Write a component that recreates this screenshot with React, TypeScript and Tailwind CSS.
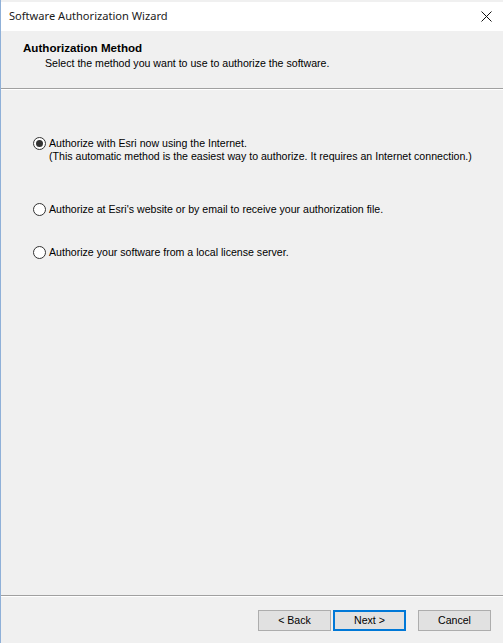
import { useState } from 'react';

const options = [
  {
    id: 'internet',
    label: 'Authorize with Esri now using the Internet.',
    note: '(This automatic method is the easiest way to authorize. It requires an Internet connection.)',
  },
  { id: 'web', label: "Authorize at Esri's website or by email to receive your authorization file." },
  { id: 'server', label: 'Authorize your software from a local license server.' },
];

const Radio = ({ checked }: { checked: boolean }) => (
  <span className="flex h-[13px] w-[13px] shrink-0 items-center justify-center rounded-full border border-[#333333] bg-white">
    {checked && <span className="h-[7px] w-[7px] rounded-full bg-[#333333]" />}
  </span>
);

export default function App() {
  const [method, setMethod] = useState('internet');

  return (
    <div
      className="flex h-[643px] w-[503px] flex-col overflow-hidden border-l border-[#8fb0d8] bg-[#f0f0f0] text-[10.6px] text-black"
      style={{ fontFamily: '"Liberation Sans", Arial, sans-serif' }}
    >
      {/* title bar */}
      <div className="mt-[2px] flex h-[29px] shrink-0 items-center justify-between bg-white pl-[8px] pr-[11px]">
        <span className="text-[11.1px] text-[#1a1a1a]" style={{ fontFamily: '"Noto Sans", "Open Sans", sans-serif' }}>
          Software Authorization Wizard
        </span>
        <svg width="11" height="11" viewBox="0 0 11 11" fill="none" stroke="#111" strokeWidth="1">
          <line x1="0.5" y1="0.5" x2="10.5" y2="10.5" />
          <line x1="10.5" y1="0.5" x2="0.5" y2="10.5" />
        </svg>
      </div>

      {/* header */}
      <div className="flex h-[58px] shrink-0 flex-col border-b border-[#a0a0a0] pl-[22px] pt-[10px]">
        <span className="text-[11.6px] font-bold leading-[13px]">Authorization Method</span>
        <span className="mt-[3px] pl-[22px] leading-[13px]">Select the method you want to use to authorize the software.</span>
      </div>
      <div className="h-px shrink-0 bg-white" />

      {/* options */}
      <div className="flex flex-1 flex-col pl-[32px] pt-[47px]">
        {options.map((o, i) => (
          <button
            key={o.id}
            onClick={() => setMethod(o.id)}
            className={`flex items-start gap-[3px] text-left ${i === 0 ? '' : i === 1 ? 'mt-[40px]' : 'mt-[30px]'}`}
          >
            <Radio checked={method === o.id} />
            <span className="flex flex-col leading-[13px]">
              <span>{o.label}</span>
              {o.note && <span>{o.note}</span>}
            </span>
          </button>
        ))}
      </div>

      {/* footer */}
      <div className="h-px shrink-0 bg-[#a0a0a0]" />
      <div className="h-px shrink-0 bg-white" />
      <div className="flex h-[46px] shrink-0 items-start gap-[2px] pl-[257px] pt-[13px]">
        <button className="h-[21px] w-[73px] border border-[#adadad] bg-[#e1e1e1]">&lt; Back</button>
        <button className="h-[21px] w-[73px] border-2 border-[#0078d7] bg-[#e1e1e1]">Next &gt;</button>
        <button className="ml-[10px] h-[21px] w-[73px] border border-[#adadad] bg-[#e1e1e1]">Cancel</button>
      </div>
    </div>
  );
}
